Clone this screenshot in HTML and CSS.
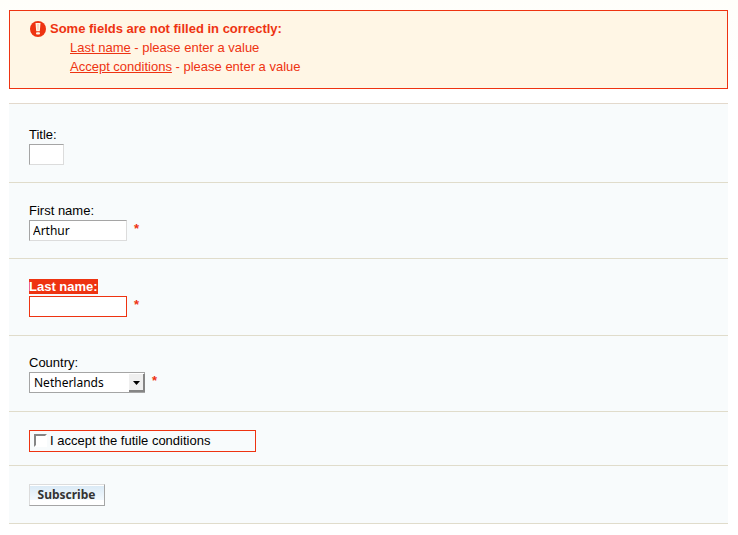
FILE: index.html
```html
<!DOCTYPE html>
<html lang="en">
<head>
<meta charset="utf-8">
<title>Subscribe</title>
<link rel="stylesheet" href="styles.css">
</head>
<body>
<section class="alert" role="alert">
  <h1 class="alert-title">
    <svg class="alert-icon" viewBox="0 0 16 16" aria-hidden="true">
      <circle cx="8" cy="8" r="8" fill="#ee3311"/>
      <path d="M5.5 2h5L9.8 10.2H6.2z" fill="#fff6e5"/>
      <path d="M7.2 3h1.6L8.5 9h-1z" fill="#f9cdb9"/>
      <rect x="6" y="11.2" width="4" height="2.4" rx="1" fill="#fff6e5"/>
    </svg>
    Some fields are not filled in correctly:
  </h1>
  <ul class="alert-list">
    <li><a href="#last-name">Last name</a> - please enter a value</li>
    <li><a href="#accept">Accept conditions</a> - please enter a value</li>
  </ul>
</section>
<form class="form">
  <div class="row row-first">
    <label for="title">Title:</label>
    <div class="field"><input class="text text-short" id="title" type="text"></div>
  </div>
  <div class="row">
    <label for="first-name">First name:</label>
    <div class="field"><input class="text" id="first-name" type="text" value="Arthur"><span class="required">*</span></div>
  </div>
  <div class="row row-error">
    <label for="last-name"><span class="flag">Last name:</span></label>
    <div class="field"><input class="text text-error" id="last-name" type="text"><span class="required">*</span></div>
  </div>
  <div class="row row-select">
    <label for="country">Country:</label>
    <div class="field">
      <span class="select-wrap">
        <select class="select" id="country"><option>Netherlands</option></select>
        <span class="select-arrow" aria-hidden="true"><svg width="7" height="4" viewBox="0 0 7 4"><path d="M0 0h7L3.5 4z"/></svg></span>
      </span>
      <span class="required">*</span>
    </div>
  </div>
  <div class="row row-check">
    <div class="check"><input class="checkbox" id="accept" type="checkbox"><label for="accept">I accept the futile conditions</label></div>
  </div>
  <div class="row">
    <button class="submit" type="submit">Subscribe</button>
  </div>
</form>
</body>
</html>
```
FILE: styles.css
```css
* {
  box-sizing: border-box;
}

body {
  margin: 10px 10px 10px 9px;
  background: linear-gradient(#fffefa, #ffffff 80px) no-repeat #ffffff;
  color: #000000;
  font: 13px/19px "Liberation Sans", Arial, sans-serif;
}

.alert {
  margin-bottom: 14px;
  padding: 8px 20px 12px;
  border: 1px solid #ee3311;
  background: #fff6e5;
  color: #ee3311;
}

.alert-title {
  display: flex;
  align-items: center;
  gap: 4px;
  margin: 0;
  font-size: 13px;
  font-weight: bold;
}

.alert-icon {
  width: 16px;
  height: 16px;
}

.alert-list {
  margin: 0;
  padding: 0 0 0 40px;
  list-style: none;
}

.alert a {
  color: inherit;
  text-underline-offset: 1px;
}

.form {
  border-top: 1px solid #e3d9cc;
  background: #f8fbfc;
}

.row {
  padding: 18px 20px 17px;
  border-bottom: 1px solid #e0dccb;
}

.row-first {
  padding-top: 21px;
}

.row-error {
  padding-bottom: 18px;
}

.row-select {
  padding-top: 17px;
  padding-bottom: 18px;
}

.row-check {
  padding-bottom: 13px;
}

.row label {
  display: block;
}

.flag {
  background: #ee3311;
  color: #ffffff;
  font-weight: bold;
}

.field {
  display: flex;
  gap: 7px;
}

.text,
.select {
  height: 21px;
  margin: 0;
  border: 1px solid #dcdcdc;
  border-radius: 0;
  background: #ffffff;
  color: #000000;
  font: 12px/17px "Noto Sans", "Lucida Grande", sans-serif;
}

.text {
  width: 98px;
  padding: 0 3px;
  border-top-color: #a5a5a5;
  border-left-color: #a5a5a5;
}

.text-short {
  width: 35px;
}

.text-error {
  border-color: #ee3311;
}

.required {
  color: #ee3311;
  font-weight: bold;
  line-height: 18px;
}

.select-wrap {
  position: relative;
  display: flex;
}

.select {
  width: 116px;
  padding: 0 18px 0 4px;
  border-color: #a5a5a5;
  appearance: none;
}

.select-arrow {
  position: absolute;
  top: 2px;
  right: 0;
  bottom: 1px;
  display: flex;
  align-items: center;
  justify-content: center;
  width: 16px;
  padding-top: 2px;
  border: solid #858585;
  border-width: 0 2px 2px 0;
  background: #efefef;
  pointer-events: none;
}

.check {
  display: flex;
  align-items: center;
  gap: 3px;
  width: 227px;
  height: 22px;
  padding: 0 4px 1px;
  border: 1px solid #ee3311;
}

.checkbox {
  width: 13px;
  height: 13px;
  margin: 0;
  border: 2px solid #858585;
  border-right-color: #ffffff;
  border-bottom-color: #ffffff;
  background: #ffffff;
  appearance: none;
}

.checkbox:checked {
  background: #333333;
}

.submit {
  display: block;
  height: 22px;
  padding: 0 8px 0 7px;
  min-width: 76px;
  border: 1px solid #a5a5a5;
  border-top-color: #dcdcdc;
  border-left-color: #dcdcdc;
  background: linear-gradient(#d9e9f5, #f3f9fe 15px, #ffffff 15px);
  box-shadow: inset 0 1px #ffffff;
  color: #333333;
  font: bold 12px/18px "Noto Sans", "Lucida Grande", sans-serif;
}
```
